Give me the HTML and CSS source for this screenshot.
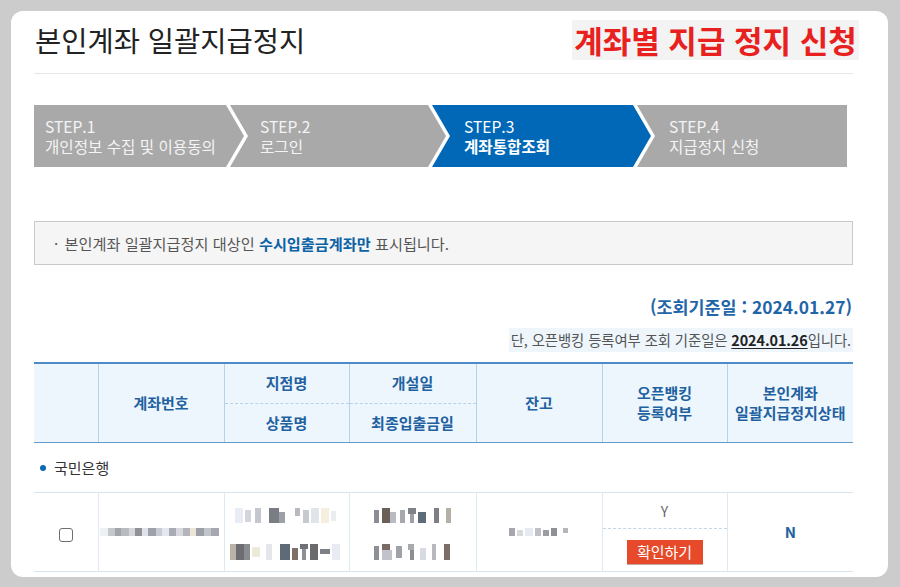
FILE: index.html
```html
<!DOCTYPE html>
<html lang="ko">
<head>
<meta charset="utf-8">
<title>본인계좌 일괄지급정지</title>
<link rel="stylesheet" href="styles.css">
</head>
<body>
<div class="card">
  <div class="page-head">
    <h1 class="title">본인계좌 일괄지급정지</h1>
    <div class="badge">계좌별 지급 정지 신청</div>
  </div>
  <div class="divider"></div>

  <ol class="steps">
    <li class="step step-first"><span class="step-no">STEP.1</span><span class="step-name">개인정보 수집 및 이용동의</span></li>
    <li class="step"><span class="step-no">STEP.2</span><span class="step-name">로그인</span></li>
    <li class="step step-on"><span class="step-no">STEP.3</span><span class="step-name">계좌통합조회</span></li>
    <li class="step step-last"><span class="step-no">STEP.4</span><span class="step-name">지급정지 신청</span></li>
  </ol>

  <div class="notice">
    <span class="notice-dot">·</span> 본인계좌 일괄지급정지 대상인 <strong>수시입출금계좌만</strong> 표시됩니다.
  </div>

  <div class="base-date">(조회기준일 : 2024.01.27)</div>
  <div class="base-note-row">
    <span class="base-note">단, 오픈뱅킹 등록여부 조회 기준일은 <b>2024.01.26</b>입니다.</span>
  </div>

  <table class="acct">
    <colgroup>
      <col class="c-chk"><col class="c-no"><col class="c-br"><col class="c-dt"><col class="c-bal"><col class="c-ob"><col class="c-st">
    </colgroup>
    <thead>
      <tr class="h1">
        <th rowspan="2" class="first"></th>
        <th rowspan="2">계좌번호</th>
        <th class="split">지점명</th>
        <th class="split">개설일</th>
        <th rowspan="2">잔고</th>
        <th rowspan="2">오픈뱅킹<br>등록여부</th>
        <th rowspan="2">본인계좌<br>일괄지급정지상태</th>
      </tr>
      <tr class="h2">
        <th>상품명</th>
        <th>최종입출금일</th>
      </tr>
    </thead>
    <tbody>
      <tr class="bank">
        <td colspan="7"><span class="bank-dot"></span>국민은행</td>
      </tr>
      <tr class="ra">
        <td rowspan="2" class="first"><span class="chk"></span></td>
        <td rowspan="2">
          <svg class="mosaic" width="122" height="8" viewBox="0 0 122 8">
            <rect x="0" y="0" width="8" height="8" fill="#eef1f4"/>
            <rect x="8" y="0" width="7" height="8" fill="#c6c8ce"/>
            <rect x="15" y="0" width="6" height="8" fill="#a3a5ab"/>
            <rect x="21" y="0" width="8" height="8" fill="#b9bbc2"/>
            <rect x="29" y="0" width="6" height="8" fill="#d5d6dc"/>
            <rect x="35" y="0" width="7" height="8" fill="#8f9197"/>
            <rect x="42" y="0" width="6" height="8" fill="#dfe2ea"/>
            <rect x="48" y="0" width="8" height="8" fill="#9fa1a8"/>
            <rect x="56" y="0" width="6" height="8" fill="#c9ccd4"/>
            <rect x="62" y="0" width="7" height="8" fill="#e4e6f0"/>
            <rect x="69" y="0" width="7" height="8" fill="#a9abb2"/>
            <rect x="76" y="0" width="7" height="8" fill="#d7d9de"/>
            <rect x="83" y="0" width="7" height="8" fill="#b3b5bb"/>
            <rect x="90" y="0" width="6" height="8" fill="#ece6d6"/>
            <rect x="96" y="0" width="8" height="8" fill="#9d9fa6"/>
            <rect x="104" y="0" width="7" height="8" fill="#c2c4cb"/>
            <rect x="111" y="0" width="8" height="8" fill="#a6a8af"/>
          </svg>
        </td>
        <td rowspan="2">
          <div class="mos-pair">
            <svg class="mosaic" width="104" height="15" viewBox="0 0 104 15">
              <rect x="0" y="0" width="8" height="15" fill="#e9ecf2"/>
              <rect x="10" y="2" width="6" height="12" fill="#d2d5dc"/>
              <rect x="20" y="0" width="6" height="15" fill="#c4c7cd"/>
              <rect x="34" y="0" width="10" height="15" fill="#7a7d83"/>
              <rect x="44" y="4" width="6" height="11" fill="#9da0a6"/>
              <rect x="60" y="0" width="5" height="8" fill="#b8bac0"/>
              <rect x="68" y="2" width="6" height="13" fill="#c7c9d0"/>
              <rect x="76" y="0" width="8" height="15" fill="#e2e4ec"/>
              <rect x="86" y="0" width="8" height="15" fill="#f4efdf"/>
              <rect x="96" y="3" width="5" height="10" fill="#ebedf2"/>
            </svg>
            <svg class="mosaic" width="114" height="16" viewBox="0 0 114 16">
              <rect x="0" y="0" width="6" height="16" fill="#b9b3a8"/>
              <rect x="6" y="0" width="8" height="16" fill="#6b6d72"/>
              <rect x="14" y="0" width="6" height="16" fill="#8a8c92"/>
              <rect x="22" y="3" width="8" height="10" fill="#efe9da"/>
              <rect x="36" y="0" width="6" height="16" fill="#e4e6ec"/>
              <rect x="50" y="0" width="10" height="16" fill="#5e6a76"/>
              <rect x="62" y="4" width="6" height="12" fill="#7c7068"/>
              <rect x="70" y="0" width="8" height="5" fill="#6e7178"/>
              <rect x="72" y="5" width="4" height="11" fill="#8d8f95"/>
              <rect x="80" y="0" width="8" height="16" fill="#6c6a6c"/>
              <rect x="90" y="5" width="10" height="5" fill="#7d8087"/>
              <rect x="102" y="0" width="8" height="16" fill="#e8ebf1"/>
            </svg>
          </div>
        </td>
        <td rowspan="2">
          <div class="mos-pair">
            <svg class="mosaic" width="78" height="15" viewBox="0 0 78 15">
              <rect x="0" y="2" width="5" height="13" fill="#8b8d92"/>
              <rect x="8" y="0" width="8" height="15" fill="#6c5f58"/>
              <rect x="16" y="4" width="6" height="11" fill="#b8bbc1"/>
              <rect x="26" y="2" width="5" height="13" fill="#a6a8ae"/>
              <rect x="34" y="0" width="8" height="6" fill="#7f8288"/>
              <rect x="36" y="6" width="4" height="9" fill="#9da0a6"/>
              <rect x="44" y="4" width="8" height="11" fill="#5f6b77"/>
              <rect x="60" y="0" width="5" height="15" fill="#7d7f85"/>
              <rect x="72" y="0" width="5" height="15" fill="#b5afa5"/>
            </svg>
            <svg class="mosaic" width="78" height="16" viewBox="0 0 78 16">
              <rect x="0" y="2" width="5" height="14" fill="#8e9096"/>
              <rect x="8" y="0" width="8" height="6" fill="#7a6c64"/>
              <rect x="8" y="6" width="10" height="10" fill="#c0c3ca"/>
              <rect x="22" y="2" width="6" height="12" fill="#9fa2a8"/>
              <rect x="34" y="0" width="6" height="6" fill="#a8aab0"/>
              <rect x="36" y="6" width="4" height="10" fill="#8c8e94"/>
              <rect x="46" y="4" width="6" height="12" fill="#d7dae1"/>
              <rect x="58" y="0" width="4" height="16" fill="#b7b9bf"/>
              <rect x="70" y="0" width="6" height="16" fill="#7b6e68"/>
            </svg>
          </div>
        </td>
        <td rowspan="2">
          <svg class="mosaic" width="60" height="8" viewBox="0 0 60 8">
            <rect x="0" y="0" width="6" height="8" fill="#a5a7ad"/>
            <rect x="8" y="2" width="6" height="6" fill="#d8dae0"/>
            <rect x="16" y="0" width="8" height="8" fill="#e6eaf2"/>
            <rect x="26" y="0" width="6" height="8" fill="#bfc1c7"/>
            <rect x="34" y="2" width="6" height="6" fill="#9b9da3"/>
            <rect x="42" y="0" width="6" height="8" fill="#8e9096"/>
            <rect x="54" y="0" width="5" height="5" fill="#b4b6bc"/>
          </svg>
        </td>
        <td class="ob-y">Y</td>
        <td rowspan="2" class="status">N</td>
      </tr>
      <tr class="rb">
        <td class="ob-btn"><span class="btn">확인하기</span></td>
      </tr>
    </tbody>
  </table>
</div>
</body>
</html>
```

FILE: styles.css
```css
* { box-sizing: border-box; }

html, body {
  margin: 0;
  padding: 0;
}

body {
  background: #cccccc;
  width: 900px;
  height: 587px;
  overflow: hidden;
  font-family: "Noto Sans CJK KR", "Noto Sans", sans-serif;
  color: #555;
}

.card {
  margin: 11px 0 0 11px;
  width: 877px;
  height: 566px;
  background: #ffffff;
  border-radius: 12px;
  overflow: hidden;
  padding: 9px 35px 0 23px;
}

.page-head {
  display: flex;
  justify-content: space-between;
  align-items: center;
  height: 40px;
}

.title {
  margin: 0;
  font-size: 28.5px;
  line-height: 40px;
  font-weight: 400;
  color: #222;
  padding-left: 1px;
}

.badge {
  height: 40px;
  width: 287px;
  margin-right: -6px;
  background: #f3f3f3;
  color: #e8201e;
  font-size: 31px;
  font-weight: 700;
  line-height: 40px;
  text-align: center;
  white-space: nowrap;
}

.divider {
  margin-top: 13px;
  height: 1px;
  background: #e6e6e6;
}

.steps {
  list-style: none;
  margin: 31px 0 0 0;
  padding: 0;
  display: flex;
  height: 62px;
}

.step {
  flex: none;
  height: 62px;
  background: #a9a9a9;
  color: #f4f4f4;
  display: flex;
  flex-direction: column;
  justify-content: center;
  padding-left: 32px;
  margin-left: -14px;
  font-size: 15.6px;
  line-height: 20px;
  clip-path: polygon(0 0, calc(100% - 18px) 0, 100% 50%, calc(100% - 18px) 100%, 0 100%, 18px 50%);
}

.step:nth-child(1) { width: 210px; }
.step:nth-child(2) { width: 216px; padding-left: 30px; }
.step:nth-child(3) { width: 219px; }
.step:nth-child(4) { width: 210px; }

.step-first {
  margin-left: 0;
  padding-left: 11px;
  clip-path: polygon(0 0, calc(100% - 18px) 0, 100% 50%, calc(100% - 18px) 100%, 0 100%);
}

.step-last {
  clip-path: polygon(0 0, 100% 0, 100% 100%, 0 100%, 18px 50%);
}

.step-on {
  background: #0068b6;
  color: #ffffff;
}

.step-on .step-name { font-weight: 700; }

.step-no, .step-name {
  display: block;
  white-space: nowrap;
  height: 20px;
  overflow: visible;
}

.notice {
  margin-top: 54px;
  height: 44px;
  background: #f5f5f5;
  border: 1px solid #c9c9c9;
  font-size: 15.2px;
  line-height: 42px;
  color: #555;
  padding-left: 19px;
}

.notice-dot { margin-right: 2px; }

.notice strong {
  color: #0b62a7;
  font-weight: 700;
}

.base-date {
  margin-top: 30px;
  text-align: right;
  font-size: 17.4px;
  line-height: 24px;
  font-weight: 700;
  color: #1f66a9;
  padding-right: 1px;
}

.base-note-row {
  margin-top: 9px;
  display: flex;
  justify-content: flex-end;
}

.base-note {
  display: block;
  background: #eef6fc;
  height: 24px;
  line-height: 24px;
  font-size: 14.4px;
  color: #555;
  padding: 0 2px 0 2px;
  letter-spacing: -0.1px;
}

.base-note b {
  color: #222;
  font-weight: 700;
  text-decoration: underline;
  text-underline-offset: 2px;
}

.acct {
  margin-top: 10px;
  width: 819px;
  table-layout: fixed;
  border-collapse: collapse;
  border-top: 2px solid #4f8cc5;
}

.c-chk { width: 64px; }
.c-no  { width: 126px; }
.c-br  { width: 125px; }
.c-dt  { width: 127px; }
.c-bal { width: 126px; }
.c-ob  { width: 125px; }
.c-st  { width: 126px; }

.acct th {
  background: #eef6fd;
  color: #22619f;
  font-size: 15px;
  font-weight: 700;
  line-height: 20px;
  padding: 0;
  text-align: center;
  white-space: nowrap;
  border-left: 1px solid #b7d1e9;
  border-bottom: 1px solid #6a9cca;
}

.acct th.first, .acct td.first { border-left: none; }

.acct tr.h1 { height: 40px; }
.acct tr.h2 { height: 39px; }

.acct th.split {
  border-bottom: 1px dashed #b7d1e9;
}

.acct td {
  padding: 0;
  text-align: center;
  vertical-align: middle;
  border-left: 1px solid #dce8f2;
  border-bottom: 1px solid #d6e4f0;
  font-size: 14px;
  color: #555;
}

.acct tr.bank { height: 50px; }

.acct tr.bank td {
  border-left: none;
  text-align: left;
  padding-left: 6px;
  color: #333;
  font-size: 15px;
}

.bank-dot {
  display: inline-block;
  width: 6px;
  height: 6px;
  border-radius: 50%;
  background: #0a6ab5;
  vertical-align: middle;
  margin: -2px 8px 0 0;
}

.acct tr.ra { height: 36px; }
.acct tr.rb { height: 43px; }

.chk {
  display: inline-block;
  width: 14px;
  height: 14px;
  border: 1px solid #6f6f6f;
  border-radius: 3px;
  background: #fff;
  vertical-align: middle;
  margin-top: 2px;
}

.mosaic {
  display: block;
  margin: 0 auto;
  filter: blur(0.5px);
}

.mos-pair {
  display: flex;
  flex-direction: column;
  align-items: center;
  gap: 21px;
  padding-top: 4px;
}

.acct td.ob-y {
  border-bottom: 1px dashed #c3d6e8;
  color: #666;
  padding-top: 2px;
}

.acct td.ob-btn {
  vertical-align: top;
  padding-top: 11px;
}

.btn {
  display: inline-block;
  width: 76px;
  height: 25px;
  line-height: 24px;
  background: #e64a2a;
  color: #fff;
  font-size: 15px;
  border-bottom: 1px solid #c9a79c;
}

.acct td.status {
  color: #22619f;
  font-weight: 700;
  font-size: 15px;
}
```
